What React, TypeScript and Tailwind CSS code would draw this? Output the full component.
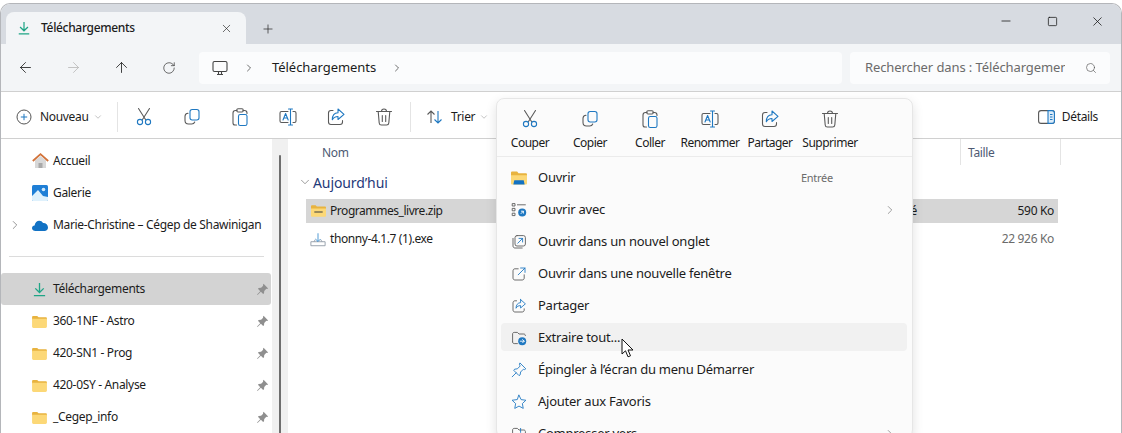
import { ChevronDown, ChevronRight, Plus, X, Minus, Square, ArrowLeft, ArrowRight, ArrowUp, RotateCw, Search } from "lucide-react";
import type { ReactNode } from "react";

const blue = "#1f78c1";
const grey = "#5a5a5a";

function Ico({ size = 20, children }: { size?: number; children: ReactNode }) {
  return (
    <svg width={size} height={size} viewBox="0 0 20 20" fill="none" strokeWidth={1.1} strokeLinecap="round" strokeLinejoin="round" className="shrink-0">
      {children}
    </svg>
  );
}

const DownloadIcon = ({ size = 16 }: { size?: number }) => (
  <svg width={size} height={size} viewBox="0 0 16 16" fill="none" stroke="#1fa586" strokeWidth={1.4} className="shrink-0">
    <path d="M8 1v10M3.5 6.8 8 11.2l4.5-4.4M2 14.6h12" />
  </svg>
);

const CutIcon = () => (
  <Ico>
    <path d="M4.5 1.5 11.5 12.5M15.5 1.5 8.5 12.5" stroke={grey} />
    <circle cx="6" cy="15" r="2.6" stroke={blue} />
    <circle cx="14" cy="15" r="2.6" stroke={blue} />
  </Ico>
);
const CopyIcon = () => (
  <Ico>
    <rect x="8" y="2.5" width="9" height="10.5" rx="2.2" stroke={blue} />
    <path d="M6 6.2c-2 .2-3 1.3-3 3v4.3c0 2.2 1.3 3.5 3.5 3.5h3.2c1.5 0 2.6-.8 3-2" stroke={grey} />
  </Ico>
);
const PasteIcon = () => (
  <Ico>
    <path d="M7 3.5H5.5C4 3.5 3 4.5 3 6v10c0 1.2.8 2 2 2h1.5M13 3.5h1.5C16 3.5 17 4.5 17 6v.5" stroke={grey} />
    <rect x="6.8" y="1.8" width="6.4" height="3.2" rx="1.2" stroke={grey} />
    <rect x="8.5" y="7.5" width="8.5" height="11" rx="1.8" stroke={blue} />
  </Ico>
);
const RenameIcon = () => (
  <Ico>
    <path d="M10 4.5H3.5C2.5 4.5 2 5 2 6v8c0 1 .5 1.5 1.5 1.5H10M15 4.5h1.5c1 0 1.5.5 1.5 1.5v8c0 1-.5 1.5-1.5 1.5H15" stroke={grey} />
    <path d="M5 13l2.6-6.500L10.200 13M5.900 11h3.400" stroke={blue} />
    <path d="M10.500 2h4M10.500 18h4M12.500 2v16" stroke={blue} />
  </Ico>
);
const ShareIcon = ({ size = 20 }: { size?: number }) => (
  <Ico size={size}>
    <path d="M7 3.5H5C3.500 3.500 2.500 4.500 2.500 6v9c0 1.500 1 2.500 2.500 2.500h9c1.500 0 2.500-1 2.500-2.500v-1.500" stroke={grey} />
    <path d="M12 2l6 5.300-6 5.200V9.500c-2.800 0-4.500 1-5.700 3.300 0-4 2-6.800 5.700-7V2z" stroke={blue} />
  </Ico>
);
const TrashIcon = () => (
  <Ico>
    <path d="M2.500 4.500h15M7.500 4.500c0-1.500 1-2.500 2.500-2.500s2.500 1 2.500 2.500M4.200 4.500l1 11.500c.1 1.200 1 2 2.200 2h5.200c1.200 0 2.100-.8 2.200-2l1-11.500M8.300 8.500v6M11.700 8.500v6" stroke={grey} />
  </Ico>
);

const Folder = () => (
  <svg width="15" height="13" viewBox="0 0 16 14" className="shrink-0">
    <path d="M0 2.500C0 1.500.5 1 1.500 1h4l1.500 1.500h7.500c1 0 1.500.5 1.500 1.500v1H0z" fill="#e8b33f" />
    <path d="M0 4h16v8.500c0 .9-.6 1.500-1.500 1.500h-13C.6 14 0 13.400 0 12.500z" fill="#fcd877" />
  </svg>
);

const Pin = () => (
  <svg width="13" height="13" viewBox="0 0 12 12" className="shrink-0" fill="#8f8f8f">
    <path d="M7 .8 11.200 5l-1 .6-.7-.2L7.600 7.300l-.2 2.200-.8.700L4.500 8.100 1.400 11l-.4-.4 2.900-3.100L1.800 5.400l.7-.8 2.200-.2 1.900-1.900-.2-.7z" />
  </svg>
);

function NavRow({ icon, label, chevron, pin, active }: { icon: ReactNode; label: string; chevron?: boolean; pin?: boolean; active?: boolean }) {
  return (
    <div className={"flex h-8 w-[270px] items-center rounded-[3px] text-[#1c1c1c] " + (active ? "bg-[#d3d3d3]" : "")}>
      <div className="flex w-[31px] justify-center">
        {chevron && <ChevronRight size={14} strokeWidth={1.3} color="#777" className="mr-[4px]" />}
      </div>
      <div className="flex w-[21px] justify-start">{icon}</div>
      <span className="flex-1 whitespace-nowrap">{label}</span>
      {pin && <div className="pr-[2px]"><Pin /></div>}
    </div>
  );
}

function ToolBtn({ children }: { children: ReactNode }) {
  return <div className="flex h-full w-12 items-center justify-center">{children}</div>;
}

function MenuTop({ icon, label }: { icon: ReactNode; label: string }) {
  return (
    <div className="flex w-[60px] flex-col items-center">
      <div className="flex h-[20px] items-center">{icon}</div>
      <span className="mt-[5px] whitespace-nowrap leading-[18px] tracking-[-0.5px]">{label}</span>
    </div>
  );
}

function MenuRow({ icon, label, right, chevron, hover }: { icon: ReactNode; label: string; right?: string; chevron?: boolean; hover?: boolean }) {
  return (
    <div className="flex h-8 items-center pl-[4px] pr-[5px]">
      <div className={"flex h-[28px] flex-1 items-center rounded-[4px] pl-[10px] pt-[2px] " + (hover ? "bg-[#f1f1f1]" : "")}>
        <div className="flex w-[27px]">{icon}</div>
        <span className="flex-1 whitespace-nowrap text-[#1c1c1c]">{label}</span>
        {right && <span className="mr-[74px] text-[11px] text-[#6b6b6b]">{right}</span>}
        {chevron && <ChevronRight size={14} strokeWidth={1.2} color="#777" className="mr-[10px]" />}
      </div>
    </div>
  );
}

export default function App() {
  return (
    <div className="h-[433px] w-[1122px] overflow-hidden bg-white pt-[3px] text-[12px] text-[#1c1c1c] [font-family:'Noto_Sans','Open_Sans',sans-serif] tracking-[-0.33px]">
      <div className="relative h-[430px] overflow-hidden rounded-t-[10px] border-x border-t border-[#b4b6ba] bg-white">
        {/* title bar */}
        <div className="flex h-[40px] items-end bg-[#d7dbe1] pl-[5px]">
          <div className="flex h-[32px] w-[240px] items-center rounded-t-[8px] bg-[#f3f5f7] pl-[11px] pr-[13px]">
            <DownloadIcon size={14} />
            <span className="ml-[10px] flex-1 font-medium">Téléchargements</span>
            <X size={13} strokeWidth={1.2} color="#222" />
          </div>
          <div className="ml-[15px] flex h-[31px] items-center">
            <Plus size={14} strokeWidth={1.2} color="#222" />
          </div>
          <div className="ml-auto flex h-full items-center pb-[6px]">
            <div className="flex w-[46px] justify-center"><Minus size={14} strokeWidth={1.3} color="#111" /></div>
            <div className="flex w-[46px] justify-center"><Square size={11} strokeWidth={1.6} color="#111" /></div>
            <div className="flex w-[46px] justify-center pr-[2px]"><X size={15} strokeWidth={1.2} color="#111" /></div>
          </div>
        </div>

        {/* nav bar */}
        <div className="flex h-[48px] items-center border-b border-[#d0d0d0] bg-[#f3f5f7] pr-[11px]">
          <div className="flex w-[48px] justify-center"><ArrowLeft size={17} strokeWidth={1.2} color="#222" /></div>
          <div className="flex w-[48px] justify-center"><ArrowRight size={17} strokeWidth={1.1} color="#b4b4b4" /></div>
          <div className="flex w-[48px] justify-center"><ArrowUp size={17} strokeWidth={1.2} color="#222" /></div>
          <div className="flex w-[48px] justify-center"><RotateCw size={14} strokeWidth={1.2} color="#333" /></div>
          <div className="ml-[6px] flex h-[32px] w-[643px] items-center rounded-[4px] bg-[#fbfcfd] pl-[13px] text-[13px] tracking-[-0.05px]">
            <svg width="16" height="16" viewBox="0 0 16 16" fill="none" stroke="#444" strokeWidth={1.1} className="shrink-0">
              <rect x="1" y="1.5" width="14" height="10" rx="1.5" />
              <path d="M5 14.500h6M6.500 12v2.500M9.500 12v2.500" />
            </svg>
            <ChevronRight size={12} strokeWidth={1.3} color="#222" className="ml-[15px]" />
            <span className="ml-[17px]">Téléchargements</span>
            <ChevronRight size={12} strokeWidth={1.3} color="#222" className="ml-[15px]" />
          </div>
          <div className="ml-[8px] flex h-[32px] flex-1 items-center rounded-[4px] bg-[#fbfcfd] pl-[15px] pr-[13px] text-[#6b6b6b]">
            <span className="w-[200px] overflow-hidden whitespace-nowrap text-[13px] tracking-[-0.1px]">Rechercher dans : Téléchargements</span>
            <Search size={12} strokeWidth={1.3} color="#555" className="ml-auto" />
          </div>
        </div>

        {/* toolbar */}
        <div className="flex h-[47px] items-center border-b border-[#d0d0d0] bg-white pr-[23px] pt-[3px]">
          <div className="flex w-[116px] items-center pl-[15px]">
            <svg width="16" height="16" viewBox="0 0 16 16" fill="none" strokeWidth={1} className="shrink-0">
              <circle cx="8" cy="8" r="7" stroke="#555" />
              <path d="M8 4.800v6.400M4.800 8h6.400" stroke={blue} />
            </svg>
            <span className="ml-[8px]">Nouveau</span>
            <ChevronDown size={10} strokeWidth={1.2} color="#888" className="ml-[4px]" />
          </div>
          <div className="h-[30px] w-px bg-[#e4e4e4]" />
          <div className="ml-[2px] flex h-full">
            <ToolBtn><CutIcon /></ToolBtn>
            <ToolBtn><CopyIcon /></ToolBtn>
            <ToolBtn><PasteIcon /></ToolBtn>
            <ToolBtn><RenameIcon /></ToolBtn>
            <ToolBtn><ShareIcon /></ToolBtn>
            <ToolBtn><TrashIcon /></ToolBtn>
          </div>
          <div className="ml-[2px] h-[30px] w-px bg-[#e4e4e4]" />
          <div className="ml-[15px] flex items-center">
            <svg width="17" height="16" viewBox="0 0 17 16" fill="none" strokeWidth={1.1} className="shrink-0">
              <path d="M5 14V2M1.500 5.500 5 2l3.500 3.500" stroke={grey} />
              <path d="M12 2v12M8.500 10.500 12 14l3.500-3.500" stroke={blue} />
            </svg>
            <span className="ml-[8px]">Trier</span>
            <ChevronDown size={10} strokeWidth={1.2} color="#888" className="ml-[4px]" />
          </div>
          <div className="ml-auto flex items-center">
            <svg width="17" height="14" viewBox="0 0 17 14" fill="none" strokeWidth={1.1} className="shrink-0">
              <rect x=".6" y=".6" width="15.8" height="12.8" rx="2.5" stroke="#555" />
              <path d="M10 .6h4c1.500 0 2.400 1 2.400 2.400v8c0 1.500-1 2.400-2.400 2.400h-4z" stroke={blue} fill="#dcecf9" />
              <path d="M12 4.500h2.500M12 7h2.500M12 9.500h2.500" stroke={blue} />
            </svg>
            <span className="ml-[7px]">Détails</span>
          </div>
        </div>

        {/* body */}
        <div className="flex h-[295px]">
          <div className="w-[271px] shrink-0 pt-[6px]">
            <NavRow label="Accueil" icon={
              <svg width="17" height="16" viewBox="0 0 17 16">
                <path d="M3 7.500 8.500 3 14 7.500V15H3z" fill="#d8d8d8" />
                <path d="M.8 8 8.500 1.200 16.200 8" fill="none" stroke="#d2733a" strokeWidth={1.8} />
                <rect x="6.500" y="10" width="4" height="5" fill="#a9a9a9" />
              </svg>
            } />
            <NavRow label="Galerie" icon={
              <svg width="16" height="16" viewBox="0 0 16 16">
                <rect width="16" height="16" rx="1.5" fill="#1f7fd6" />
                <circle cx="11.500" cy="4.500" r="1.8" fill="#cfe9fb" />
                <path d="M0 11 6 5l5 6 5 1v2.500c0 1-.5 1.500-1.500 1.500h-13C.5 16 0 15.500 0 14.500z" fill="#dff1fc" />
              </svg>
            } />
            <NavRow label="Marie-Christine – Cégep de Shawinigan" chevron icon={
              <svg width="16" height="11" viewBox="0 0 16 11">
                <path d="M3.500 11C1.500 11 0 9.800 0 8.200c0-1.500 1-2.500 2.600-2.700C3 2.500 5 .8 7.200.8c1.700 0 3 .8 3.800 2.200 2.800-.2 5 1.800 5 4.500 0 2-1.500 3.500-3.500 3.500z" fill="#1272c4" />
              </svg>
            } />
            <div className="ml-[8px] mt-[15px] h-px w-[255px] bg-[#dcdcdc]" />
            <div className="mt-[16px]">
              <NavRow label="Téléchargements" active pin icon={<DownloadIcon size={15} />} />
              <NavRow label="360-1NF - Astro" pin icon={<Folder />} />
              <NavRow label="420-SN1 - Prog" pin icon={<Folder />} />
              <NavRow label="420-0SY - Analyse" pin icon={<Folder />} />
              <NavRow label="_Cegep_info" pin icon={<Folder />} />
            </div>
          </div>

          <div className="flex w-[16px] shrink-0 justify-center bg-[#f0f0f0] pt-[16px]">
            <div className="h-full w-[2px] rounded-full bg-[#6e6e6e]" />
          </div>

          <div className="min-w-0 flex-1">
            <div className="flex h-[26px] text-[#4d5a73]">
              <span className="ml-[34px] mt-[5px] w-[638px]">Nom</span>
              <div className="h-full w-px bg-[#e4e4e4]" />
              <span className="ml-[7px] mt-[5px] w-[92px]">Taille</span>
              <div className="h-full w-px bg-[#e4e4e4]" />
            </div>
            <div className="flex h-[34px] items-center pl-[10px] text-[14px] tracking-[-0.1px] text-[#1f3a7a]">
              <ChevronDown size={14} strokeWidth={1.1} color="#666" />
              <span className="ml-[1px]">Aujourd’hui</span>
            </div>
            <div className="ml-[18px] flex h-[24px] w-[752px] items-center bg-[#d6d6d6] pl-[5px] pr-[4px]">
              <svg width="15" height="12" viewBox="0 0 18 14" className="shrink-0">
                <path d="M0 1.500C0 .5.500 0 1.500 0h4L7 1.500h9.500c1 0 1.500.5 1.500 1.500v2H0z" fill="#e8b33f" />
                <path d="M0 4h18v8.500c0 1-.5 1.500-1.500 1.500h-15C.5 14 0 13.500 0 12.500z" fill="#fcd877" />
                <path d="M4 7h10v2.500H4z" fill="#9a8a5a" />
              </svg>
              <span className="ml-[4px] w-[500px] whitespace-nowrap tracking-[-0.45px]">Programmes_livre.zip</span>
              <span className="w-[87px] whitespace-nowrap text-right">compressé</span>
              <span className="ml-auto">590 Ko</span>
            </div>
            <div className="ml-[18px] mt-[4px] flex h-[24px] w-[752px] items-center pl-[4px] pr-[4px]">
              <svg width="16" height="15" viewBox="0 0 18 16" fill="none" stroke="#8f9aa6" strokeWidth={1} className="shrink-0">
                <path d="M1 10.500h16v4.500H1zM4.500 10.500 6 8M13.500 10.500 12 8" />
                <path d="M9 1v9M6.200 7.500 9 10.300l2.800-2.800" stroke="#3c8ed0" />
              </svg>
              <span className="ml-[4px] whitespace-nowrap tracking-[-0.4px]">thonny-4.1.7 (1).exe</span>
              <span className="ml-auto text-[#6b6b6b]">22 926 Ko</span>
            </div>
          </div>
        </div>

        {/* context menu */}
        <div className="absolute left-[495px] top-[94px] h-[340px] w-[417px] rounded-[8px] border border-[#e6e6e6] bg-[#fbfbfb] shadow-[0_4px_12px_rgba(0,0,0,0.12)]">
          <div className="flex h-[58px] items-start border-b border-[#ebebeb] pl-[3px] pt-[10px]">
            <MenuTop icon={<CutIcon />} label="Couper" />
            <MenuTop icon={<CopyIcon />} label="Copier" />
            <MenuTop icon={<PasteIcon />} label="Coller" />
            <MenuTop icon={<RenameIcon />} label="Renommer" />
            <MenuTop icon={<ShareIcon />} label="Partager" />
            <MenuTop icon={<TrashIcon />} label="Supprimer" />
          </div>
          <div className="pt-[4px] text-[13px] tracking-[-0.25px]">
            <MenuRow label="Ouvrir" right="Entrée" icon={
              <svg width="16" height="14" viewBox="0 0 17 14">
                <path d="M0 1.500C0 .5.500 0 1.500 0h5L8 2h7.500c1 0 1.500.5 1.500 1.500V6H0z" fill="#e8b33f" />
                <path d="M0 4h17v8.500c0 1-.5 1.500-1.500 1.500h-14C.5 14 0 13.500 0 12.500z" fill="#fcd877" />
                <path d="M3.500 9.500h10l1 4.500h-12z" fill="#1272c4" />
              </svg>
            } />
            <MenuRow label="Ouvrir avec" chevron icon={
              <Ico size={16}>
                <path d="M2 2h3v3H2zM2 8h3v3H2zM2 14h3v3H2zM8 3.500h10" stroke={grey} />
                <circle cx="14" cy="13" r="5" fill={blue} stroke="none" />
                <path d="M12.500 14.500 15.500 11.500M13 11.500h2.500V14" stroke="white" />
              </Ico>
            } />
            <MenuRow label="Ouvrir dans un nouvel onglet" icon={
              <Ico size={16}>
                <path d="M2.500 5.500V15c0 1.500 1 2.500 2.500 2.500h9" stroke={grey} />
                <rect x="5" y="2" width="13" height="13" rx="2.500" stroke={grey} />
                <path d="M8.500 11.500 14.500 5.500M10 5.500h4.500V10" stroke={blue} />
              </Ico>
            } />
            <MenuRow label="Ouvrir dans une nouvelle fenêtre" icon={
              <Ico size={16}>
                <path d="M9 3.500H5C3.500 3.500 2.500 4.500 2.500 6v9c0 1.500 1 2.500 2.500 2.500h9c1.500 0 2.500-1 2.500-2.500v-4" stroke={grey} />
                <path d="M9 11 17.500 2.500M12 2.500h5.500V8" stroke={blue} />
              </Ico>
            } />
            <MenuRow label="Partager" icon={<ShareIcon size={16} />} />
            <MenuRow label="Extraire tout..." hover icon={
              <Ico size={16}>
                <path d="M2 15V5c0-1.200.8-2 2-2h4l2 2h6c1.200 0 2 .8 2 2M2 15c0 1.200.8 2 2 2h4" stroke={grey} />
                <circle cx="14" cy="14" r="5" fill={blue} stroke="none" />
                <path d="M11.500 14h5M14.500 12l2 2-2 2" stroke="white" />
              </Ico>
            } />
            <MenuRow label="Épingler à l’écran du menu Démarrer" icon={
              <Ico size={16}>
                <path d="M11.500 1.500 18.500 8.500 17 9.500l-1.500-.5-3.500 3.500-.5 3.500-1.500 1-6.500-6.500 1-1.500 3.500-.5L11.500 5l-.8-1.800zM6.500 13.500 1.500 18.500" stroke={blue} />
              </Ico>
            } />
            <MenuRow label="Ajouter aux Favoris" icon={
              <Ico size={16}>
                <path d="M10 1.500 12.600 7l6 .8-4.400 4.200 1.100 6L10 15.100 4.700 18l1.100-6L1.400 7.800l6-.8z" stroke={blue} />
              </Ico>
            } />
            <MenuRow label="Compresser vers" chevron icon={
              <Ico size={16}>
                <path d="M2 15V5c0-1.200.8-2 2-2h4l2 2h6c1.200 0 2 .8 2 2v8c0 1.200-.8 2-2 2H4c-1.200 0-2-.8-2-2z" stroke={grey} />
                <path d="M12 3v5" stroke={blue} />
              </Ico>
            } />
          </div>
        </div>

        {/* mouse cursor */}
        <svg width="14" height="21" viewBox="0 0 14 21" className="absolute left-[620px] top-[334px]">
          <path d="M1 1v15l3.500-3.200 2.500 6 2.500-1-2.500-5.800H12z" fill="#fff" stroke="#111" strokeWidth={1} strokeLinejoin="round" />
        </svg>
      </div>
    </div>
  );
}
